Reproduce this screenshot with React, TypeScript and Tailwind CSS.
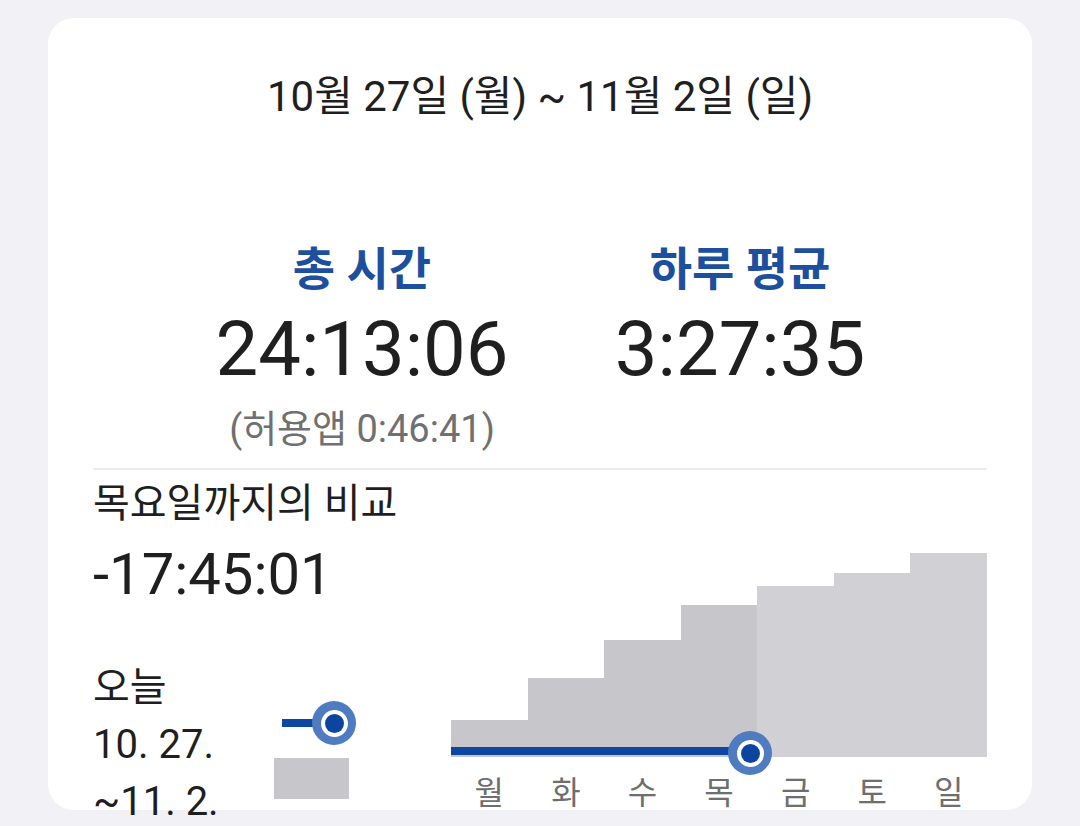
const bars = [
  { day: "월", h: "h-[37px]", past: true },
  { day: "화", h: "h-[79px]", past: true },
  { day: "수", h: "h-[117px]", past: true },
  { day: "목", h: "h-[152px]", past: true },
  { day: "금", h: "h-[171px]", past: false },
  { day: "토", h: "h-[184px]", past: false },
  { day: "일", h: "h-[204px]", past: false },
];

function Marker() {
  // outer light ring, white ring, dark dot
  return (
    <div className="w-[44px] h-[44px] shrink-0 rounded-full bg-[#4f7cc0] flex items-center justify-center">
      <div className="w-[27px] h-[27px] rounded-full bg-white flex items-center justify-center">
        <div className="w-[19px] h-[19px] rounded-full bg-[#0c45a0]" />
      </div>
    </div>
  );
}

export default function App() {
  return (
    <div className="w-[1080px] h-[826px] overflow-hidden bg-[#f2f1f6] pt-[18px] font-['Roboto','Noto_Sans_CJK_KR',sans-serif] text-[#1f1f1f]">
      <div className="mx-[48px] h-[792px] rounded-[26px] bg-white px-[45px]">
        {/* Period */}
        <div className="pt-[57px] text-center text-[42px] leading-[44px]">
          10월 27일 (월) ~ 11월 2일 (일)
        </div>

        {/* Totals */}
        <div className="mt-[127px] flex pl-[119px] gap-[78px]">
          <div className="w-[300px] flex flex-col items-center">
            <div className="text-[46px] leading-[46px] font-bold text-[#1d4f9f]">총 시간</div>
            <div className="mt-[17px] text-[76px] leading-[80px]">24:13:06</div>
            <div className="mt-[20px] text-[38px] leading-[40px] text-[#707070]">(허용앱 0:46:41)</div>
          </div>
          <div className="w-[300px] flex flex-col items-center">
            <div className="text-[46px] leading-[46px] font-bold text-[#1d4f9f]">하루 평균</div>
            <div className="mt-[17px] text-[76px] leading-[80px]">3:27:35</div>
          </div>
        </div>

        <div className="mt-[19px] h-[2px] bg-[#ebebef]" />

        {/* Comparison */}
        <div className="flex">
          <div className="flex-1">
            <div className="mt-[12px] text-[40px] leading-[44px]">목요일까지의 비교</div>
            <div className="mt-[18px] text-[58px] leading-[60px]">-17:45:01</div>
            <div className="mt-[55px] flex">
              <div className="w-[181px] shrink-0 text-[40px] leading-[57px]">
                <div>오늘</div>
                <div>10. 27.</div>
                <div>~11. 2.</div>
              </div>
              <div className="w-[75px] shrink-0 pt-[42px]">
                <div className="flex items-center">
                  <div className="ml-[8px] w-[36px] h-[8px] shrink-0 bg-[#0d47a1]" />
                  <div className="-ml-[6px] shrink-0">
                    <Marker />
                  </div>
                </div>
                <div className="mt-[13px] h-[41px] bg-[#c7c7cb]" />
              </div>
            </div>
          </div>

          <div className="w-[536px] pt-[83px]">
            <div className="relative flex items-end h-[204px]">
              {bars.map((b) => (
                <div key={b.day} className={`flex-1 ${b.h} ${b.past ? "bg-[#c7c7cb]" : "bg-[#d1d1d5]"}`} />
              ))}
              <div className="absolute left-0 bottom-[2px] w-[299px] h-[8px] bg-[#0d47a1]" />
              <div className="absolute left-[277px] bottom-[-18px]">
                <Marker />
              </div>
            </div>
            <div className="flex mt-[18px]">
              {bars.map((b) => (
                <div key={b.day} className="flex-1 text-center text-[32px] leading-[36px] text-[#6e6e6e]">
                  {b.day}
                </div>
              ))}
            </div>
          </div>
        </div>
      </div>
    </div>
  );
}
